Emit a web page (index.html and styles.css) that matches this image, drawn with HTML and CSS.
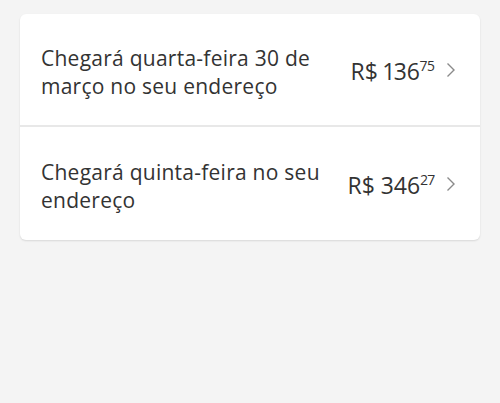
FILE: index.html
```html
<!DOCTYPE html>
<html lang="pt-BR">
<head>
<meta charset="UTF-8">
<meta name="viewport" content="width=device-width, initial-scale=1.0">
<title>Opções de entrega</title>
<link rel="stylesheet" href="styles.css">
</head>
<body>

<div class="shipping-card">
  <div class="shipping-option">
    <p class="shipping-text">Chegará quarta-feira 30 de março no seu endereço</p>
    <span class="shipping-price">R$ 136<sup>75</sup></span>
    <svg class="chevron" width="10" height="16" viewBox="0 0 10 16"><path d="M1.5 1.5 L8 8 L1.5 14.5" fill="none" stroke="#8a8a8a" stroke-width="1.4"/></svg>
  </div>
  <div class="shipping-option">
    <p class="shipping-text">Chegará quinta-feira no seu endereço</p>
    <span class="shipping-price">R$ 346<sup>27</sup></span>
    <svg class="chevron" width="10" height="16" viewBox="0 0 10 16"><path d="M1.5 1.5 L8 8 L1.5 14.5" fill="none" stroke="#8a8a8a" stroke-width="1.4"/></svg>
  </div>
</div>

</body>
</html>
```

FILE: styles.css
```css
body {
  font-family: "Open Sans", Arial, sans-serif;
  margin: 0;
  padding: 14px 20px;
  background-color: #f4f4f4;
  color: #333;
}
.shipping-card {
  background-color: #fff;
  border-radius: 6px;
  box-shadow: 0 1px 2px rgba(0, 0, 0, 0.12);
}
.shipping-option {
  display: flex;
  align-items: center;
  height: 113px;
  padding: 0 24px 0 21px;
  box-sizing: border-box;
  border-bottom: 2px solid #e8e8e8;
}
.shipping-option:last-child {
  border-bottom: none;
}
.shipping-text {
  flex: 1;
  margin: 5px 24px 0 0;
  font-size: 21px;
  line-height: 28px;
  letter-spacing: 0.25px;
}
.shipping-price {
  font-size: 23px;
  white-space: nowrap;
  font-variant-numeric: proportional-nums;
  margin-top: 2px;
}
.shipping-price sup {
  font-size: 14px;
  vertical-align: 9px;
  line-height: 0;
}
.chevron {
  margin-left: 11px;
}
```
